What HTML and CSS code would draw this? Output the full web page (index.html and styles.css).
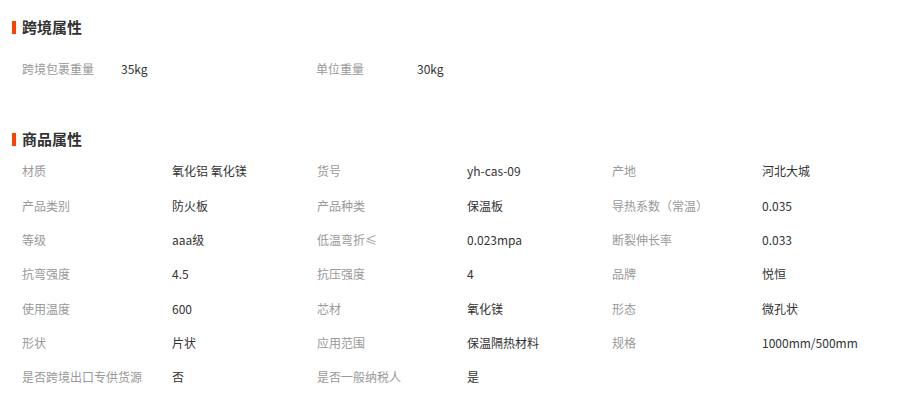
FILE: index.html
```html
<!DOCTYPE html>
<html lang="zh-CN">
<head>
<meta charset="utf-8">
<title>属性</title>
<link rel="stylesheet" href="styles.css">
</head>
<body>
<section class="section section-cross">
  <h2 class="section-title"><span class="title-bar"></span>跨境属性</h2>
  <div class="attr-grid attr-grid-cross">
    <div class="label">跨境包裹重量</div><div class="value">35kg</div>
    <div class="label">单位重量</div><div class="value">30kg</div>
  </div>
</section>
<section class="section section-product">
  <h2 class="section-title"><span class="title-bar"></span>商品属性</h2>
  <div class="attr-grid attr-grid-product">
    <div class="label">材质</div><div class="value">氧化铝 氧化镁</div>
    <div class="label">货号</div><div class="value">yh-cas-09</div>
    <div class="label">产地</div><div class="value">河北大城</div>

    <div class="label">产品类别</div><div class="value">防火板</div>
    <div class="label">产品种类</div><div class="value">保温板</div>
    <div class="label">导热系数（常温）</div><div class="value">0.035</div>

    <div class="label">等级</div><div class="value">aaa级</div>
    <div class="label">低温弯折≤</div><div class="value">0.023mpa</div>
    <div class="label">断裂伸长率</div><div class="value">0.033</div>

    <div class="label">抗弯强度</div><div class="value">4.5</div>
    <div class="label">抗压强度</div><div class="value">4</div>
    <div class="label">品牌</div><div class="value">悦恒</div>

    <div class="label">使用温度</div><div class="value">600</div>
    <div class="label">芯材</div><div class="value">氧化镁</div>
    <div class="label">形态</div><div class="value">微孔状</div>

    <div class="label">形状</div><div class="value">片状</div>
    <div class="label">应用范围</div><div class="value">保温隔热材料</div>
    <div class="label">规格</div><div class="value">1000mm/500mm</div>

    <div class="label">是否跨境出口专供货源</div><div class="value">否</div>
    <div class="label">是否一般纳税人</div><div class="value">是</div>
  </div>
</section>
</body>
</html>
```
FILE: styles.css
```css
html, body {
  margin: 0;
  padding: 0;
  background: #fff;
}
body {
  font-family: "Noto Sans CJK SC", "Liberation Sans", sans-serif;
  font-size: 12px;
  color: #333;
  width: 903px;
  height: 399px;
  overflow: hidden;
}
.section-title {
  display: flex;
  align-items: center;
  height: 20px;
  margin: 0;
  padding-left: 12px;
  font-size: 15px;
  font-weight: bold;
  color: #333;
  line-height: 20px;
}
.title-bar {
  width: 4px;
  height: 13px;
  background: #ff4000;
  margin-right: 6px;
}
.section-cross {
  padding-top: 17px;
}
.section-cross .attr-grid {
  margin-top: 15px;
}
.section-product {
  margin-top: 43px;
}
.section-product .attr-grid {
  margin-top: 5px;
}
.attr-grid {
  display: grid;
  padding-left: 22px;
  grid-auto-rows: 34.33px;
  align-items: center;
  line-height: 16px;
}
.attr-grid-cross {
  grid-template-columns: 99px 195px 101px 1fr;
}
.attr-grid-product {
  grid-template-columns: 150px 145px 150px 145px 150px 1fr;
}
.label {
  color: #999;
  white-space: nowrap;
}
.value {
  color: #333;
  white-space: nowrap;
}
```
